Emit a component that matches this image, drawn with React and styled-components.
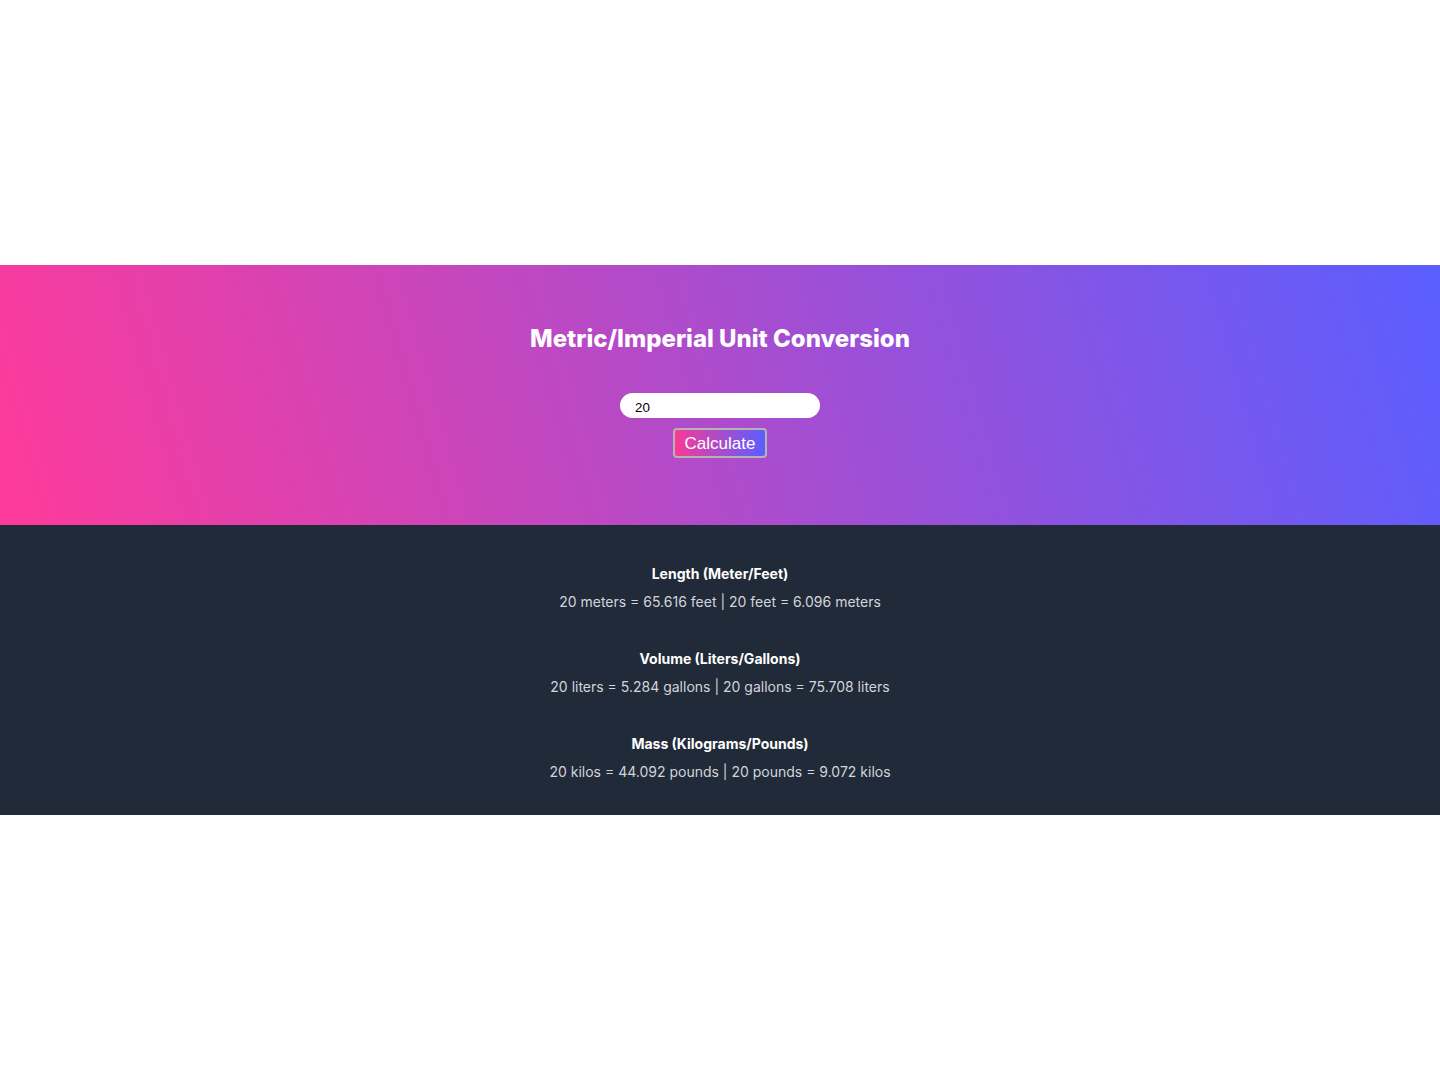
import styled, { createGlobalStyle } from "styled-components"

const GlobalStyle = createGlobalStyle`
  * { box-sizing: border-box; }
  body {
    margin: 0;
    background: #ffffff;
    font-family: Inter, "Noto Sans", sans-serif;
  }
`

const Page = styled.div`
  min-height: 100vh;
  display: flex;
  flex-direction: column;
  justify-content: center;
`

const Hero = styled.section`
  height: 260px;
  padding-top: 58px;
  display: flex;
  flex-direction: column;
  align-items: center;
  background: linear-gradient(74deg, #ff3a9a, #5a5eff);
`

const Title = styled.h1`
  margin: 0 0 38px;
  font-size: 24px;
  line-height: 32px;
  font-weight: 800;
  color: #ffffff;
`

const Input = styled.input`
  width: 200px;
  height: 25px;
  padding: 4px 15px 0;
  border: none;
  border-radius: 13px;
  background: #ffffff;
  color: #000000;
  font-family: "Liberation Sans", Arial, sans-serif;
  font-size: 13.33px;
  outline: none;
`

const Button = styled.button`
  margin-top: 10px;
  height: 30px;
  padding: 2px 10px 0;
  border: 2px solid #b4b4b4;
  border-radius: 4px;
  background: linear-gradient(to right, #f83a96, #5a5eff);
  color: #ffffff;
  font-family: "Liberation Sans", Arial, sans-serif;
  font-size: 17px;
  cursor: pointer;
`

const Results = styled.section`
  height: 290px;
  padding-top: 39px;
  display: flex;
  flex-direction: column;
  align-items: center;
  gap: 35px;
  background: #212a38;
`

const Group = styled.div`
  display: flex;
  flex-direction: column;
  align-items: center;
`

const GroupTitle = styled.h2`
  margin: 0 0 6px;
  font-size: 14px;
  line-height: 20px;
  font-weight: 700;
  color: #ffffff;
`

const GroupText = styled.p`
  margin: 0;
  font-size: 14px;
  line-height: 24px;
  color: #d1d5db;
`

const conversions = [
  {
    title: "Length (Meter/Feet)",
    text: "20 meters = 65.616 feet | 20 feet = 6.096 meters",
  },
  {
    title: "Volume (Liters/Gallons)",
    text: "20 liters = 5.284 gallons | 20 gallons = 75.708 liters",
  },
  {
    title: "Mass (Kilograms/Pounds)",
    text: "20 kilos = 44.092 pounds | 20 pounds = 9.072 kilos",
  },
]

const App = () => {
  return (
    <>
      <GlobalStyle />
      <Page>
        <Hero>
          <Title>Metric/Imperial Unit Conversion</Title>
          <Input type="number" defaultValue="20" />
          <Button>Calculate</Button>
        </Hero>
        <Results>
          {conversions.map((c) => (
            <Group key={c.title}>
              <GroupTitle>{c.title}</GroupTitle>
              <GroupText>{c.text}</GroupText>
            </Group>
          ))}
        </Results>
      </Page>
    </>
  )
}

export default App
